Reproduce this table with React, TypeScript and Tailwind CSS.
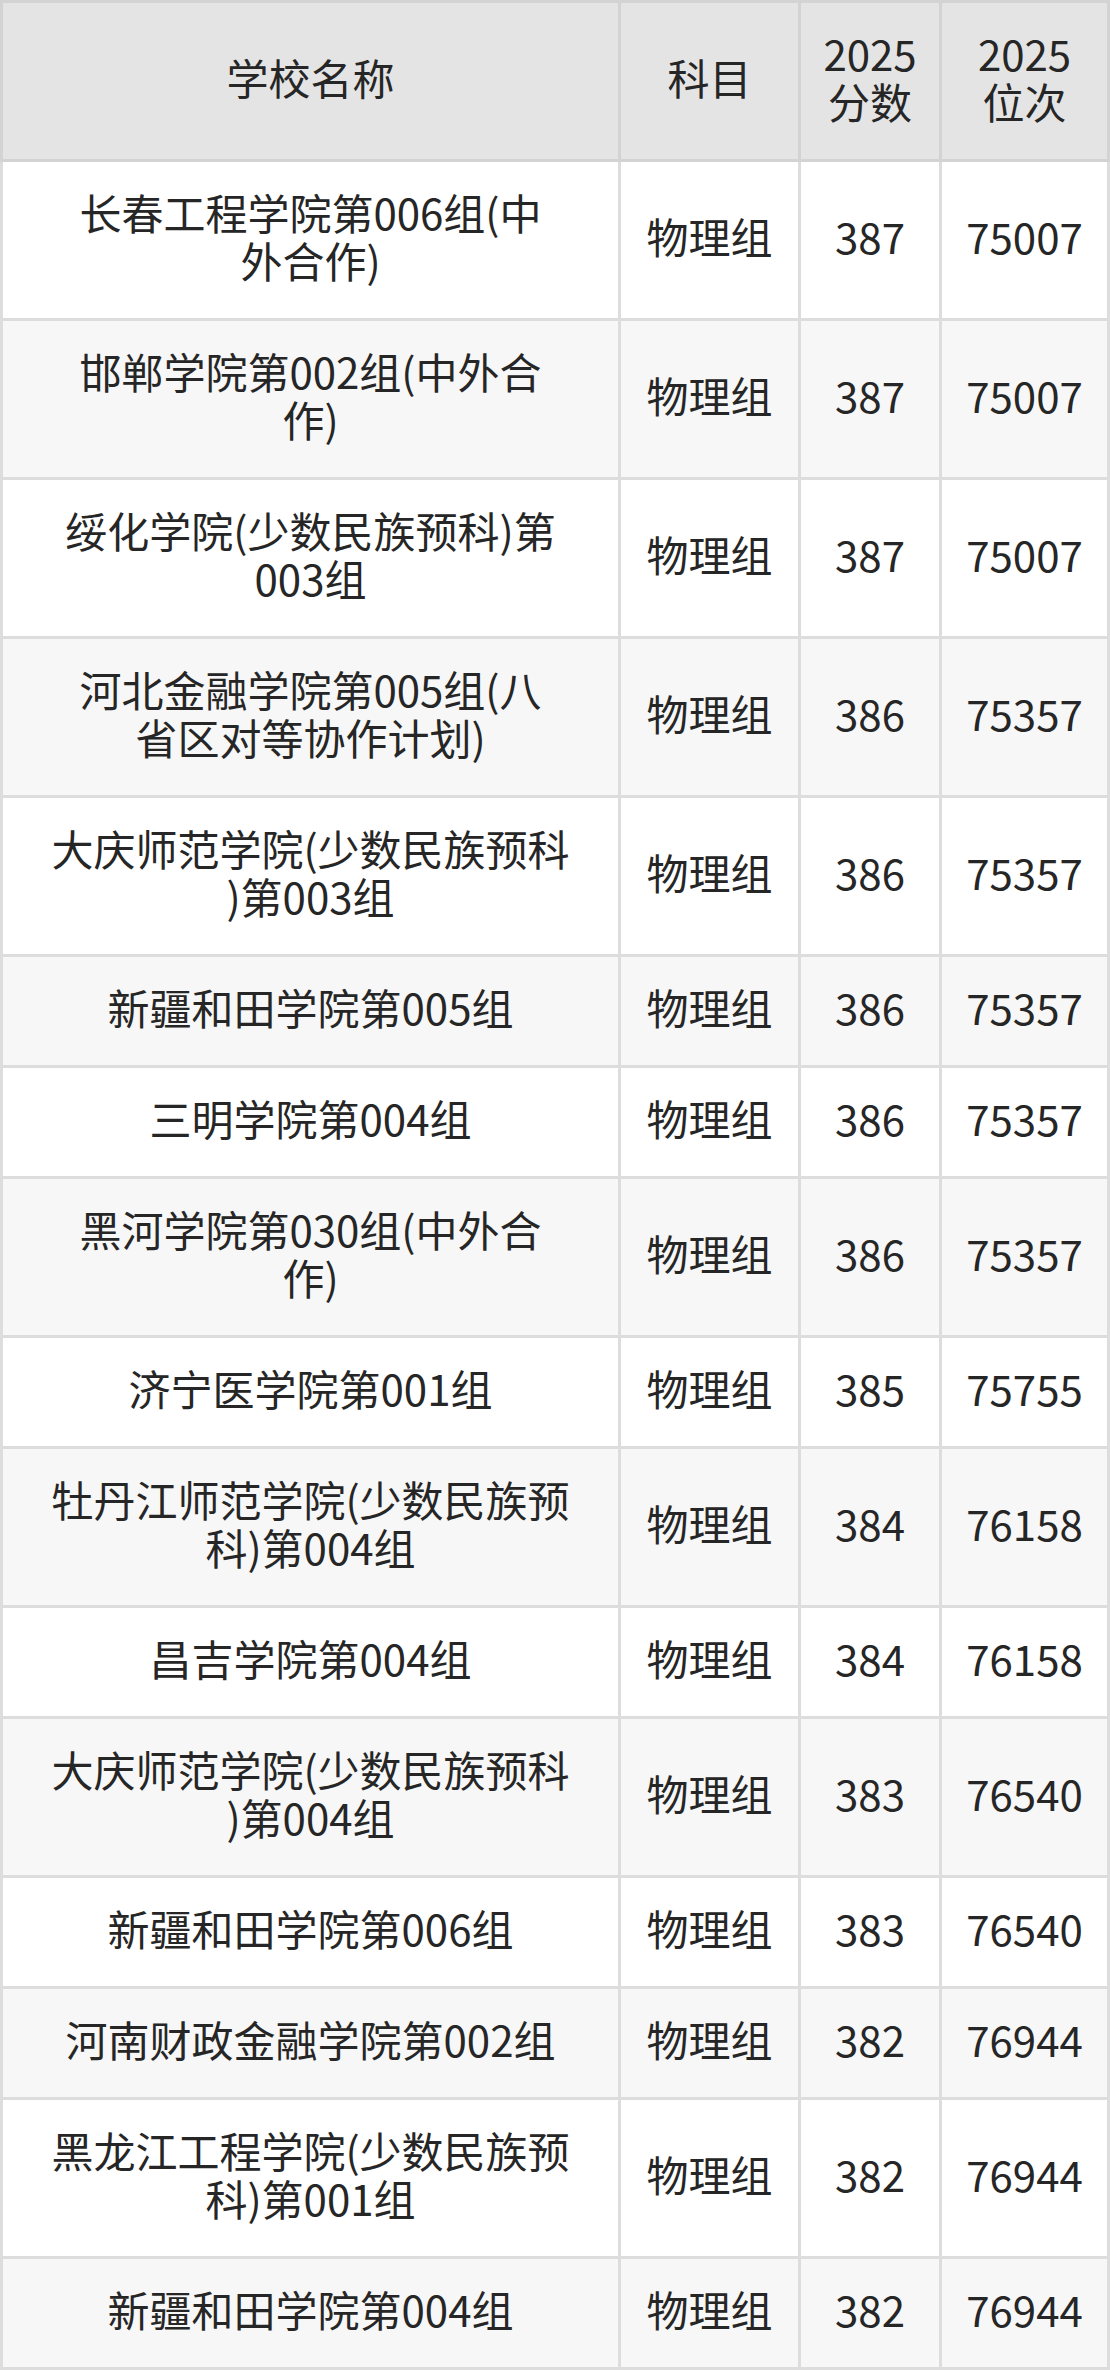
type Row = { name: string[]; subject: string; score: string; rank: string };

const rows: Row[] = [
  { name: ["长春工程学院第006组(中", "外合作)"], subject: "物理组", score: "387", rank: "75007" },
  { name: ["邯郸学院第002组(中外合", "作)"], subject: "物理组", score: "387", rank: "75007" },
  { name: ["绥化学院(少数民族预科)第", "003组"], subject: "物理组", score: "387", rank: "75007" },
  { name: ["河北金融学院第005组(八", "省区对等协作计划)"], subject: "物理组", score: "386", rank: "75357" },
  { name: ["大庆师范学院(少数民族预科", ")第003组"], subject: "物理组", score: "386", rank: "75357" },
  { name: ["新疆和田学院第005组"], subject: "物理组", score: "386", rank: "75357" },
  { name: ["三明学院第004组"], subject: "物理组", score: "386", rank: "75357" },
  { name: ["黑河学院第030组(中外合", "作)"], subject: "物理组", score: "386", rank: "75357" },
  { name: ["济宁医学院第001组"], subject: "物理组", score: "385", rank: "75755" },
  { name: ["牡丹江师范学院(少数民族预", "科)第004组"], subject: "物理组", score: "384", rank: "76158" },
  { name: ["昌吉学院第004组"], subject: "物理组", score: "384", rank: "76158" },
  { name: ["大庆师范学院(少数民族预科", ")第004组"], subject: "物理组", score: "383", rank: "76540" },
  { name: ["新疆和田学院第006组"], subject: "物理组", score: "383", rank: "76540" },
  { name: ["河南财政金融学院第002组"], subject: "物理组", score: "382", rank: "76944" },
  { name: ["黑龙江工程学院(少数民族预", "科)第001组"], subject: "物理组", score: "382", rank: "76944" },
  { name: ["新疆和田学院第004组"], subject: "物理组", score: "382", rank: "76944" },
];

function Lines({ lines }: { lines: string[] }) {
  return (
    <div className="text-center">
      {lines.map((l, i) => (
        <div key={i} className="whitespace-nowrap">
          {l}
        </div>
      ))}
    </div>
  );
}

export default function App() {
  const head = "flex items-center justify-center pt-[26px] pb-[34px] bg-[#e4e4e4] border-t-[3px] border-r-[3px] border-b-[3px] border-[#d3d3d3]";
  return (
    <div
      className="w-[1110px] bg-white text-[42px] leading-[48px] text-[#262626]"
      style={{ fontFamily: '"Noto Sans CJK SC", "Noto Sans", sans-serif' }}
    >
      <div className="grid grid-cols-[621px_180px_141px_168px]">
        <div className={head + " border-l-[3px]"}>
          <Lines lines={["学校名称"]} />
        </div>
        <div className={head}>
          <Lines lines={["科目"]} />
        </div>
        <div className={head}>
          <Lines lines={["2025", "分数"]} />
        </div>
        <div className={head}>
          <Lines lines={["2025", "位次"]} />
        </div>

        {rows.map((r, i) => {
          const bg = i % 2 === 1 ? "bg-[#f7f7f7]" : "bg-white";
          const cell = `flex items-center justify-center pt-[26px] pb-[34px] border-r-[3px] border-b-[3px] border-[#dddddd] ${bg}`;
          return [
            <div key={`n${i}`} className={cell + " border-l-[3px]"}>
              <Lines lines={r.name} />
            </div>,
            <div key={`s${i}`} className={cell}>
              {r.subject}
            </div>,
            <div key={`c${i}`} className={cell}>
              {r.score}
            </div>,
            <div key={`r${i}`} className={cell}>
              {r.rank}
            </div>,
          ];
        })}
      </div>
    </div>
  );
}
